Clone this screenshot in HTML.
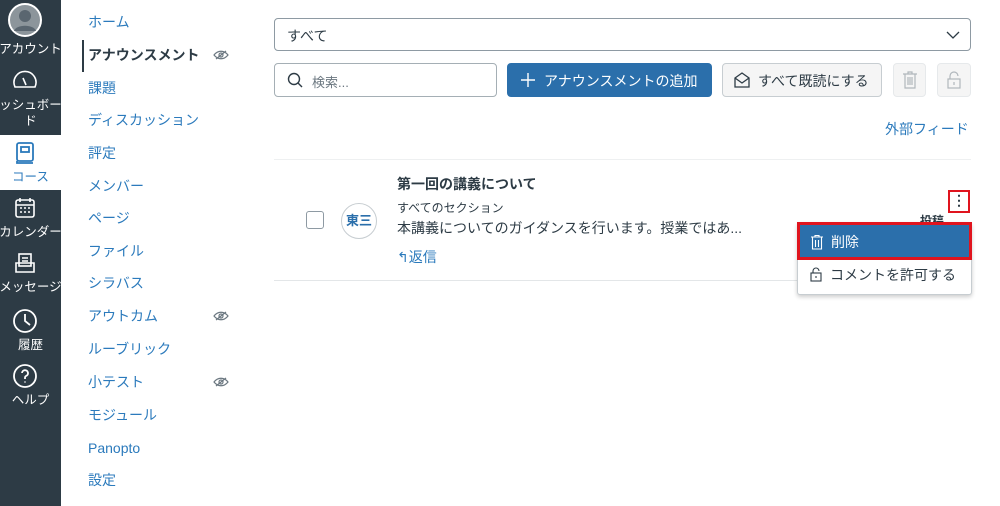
<!DOCTYPE html>
<html><head><meta charset="utf-8"><style>
*{margin:0;padding:0;box-sizing:border-box}
body{width:1000px;height:506px;overflow:hidden;background:#fff;font-family:"Liberation Sans","Noto Sans CJK JP",sans-serif;position:relative;color:#2d3b45}
.side{position:absolute;left:0;top:0;width:61px;height:506px;background:#2d3b45}
.si{position:absolute;left:0;width:61px;text-align:center;color:#fff;font-size:12.5px;white-space:nowrap;overflow:hidden}
.nav{position:absolute;left:88px;font-size:14px;line-height:20px;color:#2b7abc}
.eye{position:absolute;left:213px;width:16px;height:10px}
.a{position:absolute}
</style></head><body>
<div class="side"></div>
<div class="si" style="top:0;height:58px">
<svg width="34" height="34" style="position:absolute;left:8px;top:3px" viewBox="0 0 34 34"><circle cx="17" cy="17" r="16" fill="#8c959b" stroke="#fff" stroke-width="2"/><circle cx="17" cy="13" r="6" fill="#5a6670"/><path d="M6 28c2-7 20-7 22 0" fill="#5a6670"/></svg>
<div style="position:absolute;top:38px;left:-5px;width:71px">アカウント</div></div>
<div class="si" style="top:66px;height:66px">
<svg width="26" height="20" style="position:absolute;left:12px;top:4px" viewBox="0 0 26 20" fill="none" stroke="#fff" stroke-width="1.6"><path d="M3 17A11 11 0 1 1 23 17Z"/><path d="M11 8l3 7"/></svg>
<div style="position:absolute;top:28px;left:-10px;width:81px">ッシュボー</div><div style="position:absolute;top:44px;width:61px">ド</div></div>
<div class="a" style="left:0;top:135px;width:61px;height:55px;background:#fff"></div>
<div class="si" style="top:138px;height:50px;color:#2b7abc">
<svg width="20" height="24" style="position:absolute;left:15px;top:3px" viewBox="0 0 20 24" fill="none" stroke="#2b7abc" stroke-width="1.8"><rect x="2" y="2" width="16" height="18" rx="2"/><rect x="6" y="6" width="8" height="5"/><path d="M2 20v2h16"/></svg>
<div style="position:absolute;top:28px;width:61px">コース</div></div>
<div class="si" style="top:195px;height:45px">
<svg width="22" height="22" style="position:absolute;left:14px;top:2px" viewBox="0 0 22 22" fill="none" stroke="#fff" stroke-width="1.6"><rect x="2" y="3" width="18" height="17" rx="2"/><path d="M2 8h18M6 1v4M16 1v4M6 11h2M10 11h2M14 11h2M6 15h2M10 15h2M14 15h2"/></svg>
<div style="position:absolute;top:26px;left:-5px;width:71px">カレンダー</div></div>
<div class="si" style="top:250px;height:45px">
<svg width="22" height="22" style="position:absolute;left:14px;top:2px" viewBox="0 0 22 22" fill="none" stroke="#fff" stroke-width="1.6"><rect x="5" y="2" width="12" height="12"/><path d="M8 6h6M8 9h6M2 11h18v9H2z"/></svg>
<div style="position:absolute;top:26px;left:-5px;width:71px">メッセージ</div></div>
<div class="si" style="top:307px;height:45px">
<svg width="26" height="26" style="position:absolute;left:12px;top:1px" viewBox="0 0 26 26" fill="none" stroke="#fff" stroke-width="1.8"><circle cx="13" cy="13" r="11"/><path d="M13 6v7l5 4"/></svg>
<div style="position:absolute;top:27px;width:61px">履歴</div></div>
<div class="si" style="top:362px;height:45px">
<svg width="26" height="26" style="position:absolute;left:12px;top:1px" viewBox="0 0 26 26" fill="none" stroke="#fff" stroke-width="1.8"><circle cx="13" cy="13" r="11"/><path d="M10 10a3 3 0 1 1 4 3c-1 .5-1 1-1 3M13 18.5v1"/></svg>
<div style="position:absolute;top:27px;width:61px">ヘルプ</div></div>

<div class="a" style="left:82px;top:40px;width:2px;height:32px;background:#2d3b45"></div>
<div class="nav" style="top:12px">ホーム</div>
<div class="nav" style="top:45px;color:#2d3b45;font-weight:bold">アナウンスメント</div>
<div class="nav" style="top:78px">課題</div>
<div class="nav" style="top:110px">ディスカッション</div>
<div class="nav" style="top:143px">評定</div>
<div class="nav" style="top:176px">メンバー</div>
<div class="nav" style="top:208px">ページ</div>
<div class="nav" style="top:241px">ファイル</div>
<div class="nav" style="top:273px">シラバス</div>
<div class="nav" style="top:306px">アウトカム</div>
<div class="nav" style="top:339px">ルーブリック</div>
<div class="nav" style="top:372px">小テスト</div>
<div class="nav" style="top:405px">モジュール</div>
<div class="nav" style="top:438px">Panopto</div>
<div class="nav" style="top:470px">設定</div>
<svg class="eye" style="top:50px" viewBox="0 0 16 10" fill="none" stroke="#6b7780" stroke-width="1.2"><path d="M1 5c4-5 10-5 14 0c-4 5-10 5-14 0z"/><circle cx="8" cy="5" r="2"/><path d="M3 9L13 1"/></svg>
<svg class="eye" style="top:311px" viewBox="0 0 16 10" fill="none" stroke="#6b7780" stroke-width="1.2"><path d="M1 5c4-5 10-5 14 0c-4 5-10 5-14 0z"/><circle cx="8" cy="5" r="2"/><path d="M3 9L13 1"/></svg>
<svg class="eye" style="top:377px" viewBox="0 0 16 10" fill="none" stroke="#6b7780" stroke-width="1.2"><path d="M1 5c4-5 10-5 14 0c-4 5-10 5-14 0z"/><circle cx="8" cy="5" r="2"/><path d="M3 9L13 1"/></svg>

<div class="a" style="left:274px;top:18px;width:697px;height:33px;border:1px solid #8e9aa3;border-radius:4px;font-size:14px;padding:7px 12px">すべて
<svg width="14" height="8" style="position:absolute;right:10px;top:12px" viewBox="0 0 14 8" fill="none" stroke="#2d3b45" stroke-width="1.3"><path d="M1 1l6 6 6-6"/></svg></div>
<div class="a" style="left:274px;top:63px;width:223px;height:34px;border:1px solid #a5afb5;border-radius:4px;font-size:13px;color:#6b7780;padding:8px 0 0 37px">検索...
<svg width="16" height="16" style="position:absolute;left:12px;top:8px" viewBox="0 0 16 16" fill="none" stroke="#2d3b45" stroke-width="1.4"><circle cx="7" cy="7" r="5.5"/><path d="M11 11l4 4"/></svg></div>
<div class="a" style="left:507px;top:63px;width:205px;height:34px;background:#2b6fab;border-radius:4px;color:#fff;font-size:14px;padding:8px 0 0 37px">アナウンスメントの追加
<svg width="16" height="16" style="position:absolute;left:13px;top:9px" viewBox="0 0 16 16" stroke="#fff" stroke-width="1.4"><path d="M8 1v14M1 8h14"/></svg></div>
<div class="a" style="left:722px;top:63px;width:160px;height:34px;background:#f5f5f5;border:1px solid #c7cdd1;border-radius:4px;font-size:14px;padding:7px 0 0 35px">すべて既読にする
<svg width="18" height="18" style="position:absolute;left:10px;top:7px" viewBox="0 0 18 18" fill="none" stroke="#2d3b45" stroke-width="1.3"><path d="M2 7l7-5 7 5v9H2z"/><path d="M2 7l7 5 7-5"/></svg></div>
<div class="a" style="left:893px;top:63px;width:33px;height:34px;background:#f5f5f5;border:1px solid #e6e9eb;border-radius:4px">
<svg width="16" height="18" style="position:absolute;left:8px;top:7px" viewBox="0 0 16 18" fill="none" stroke="#b0b7bc" stroke-width="1.2"><path d="M1 3h14M6 3V1h4v2M3 3v14h10V3M6 6v8M8 6v8M10 6v8"/></svg></div>
<div class="a" style="left:937px;top:63px;width:34px;height:34px;background:#f5f5f5;border:1px solid #e6e9eb;border-radius:4px">
<svg width="14" height="18" style="position:absolute;left:9px;top:7px" viewBox="0 0 14 18" fill="none" stroke="#b0b7bc" stroke-width="1.2"><path d="M3 8V5a4 4 0 0 1 8 0"/><rect x="1" y="8" width="12" height="9"/><path d="M7 11v3"/></svg></div>
<div class="a" style="left:885px;top:119px;font-size:14px;color:#2b7abc">外部フィード</div>

<div class="a" style="left:274px;top:159px;width:697px;height:1px;background:#eef0f1"></div>
<div class="a" style="left:274px;top:280px;width:697px;height:1px;background:#e3e6e8"></div>
<div class="a" style="left:306px;top:211px;width:18px;height:18px;border:1px solid #8e9aa3;border-radius:3px"></div>
<div class="a" style="left:341px;top:203px;width:36px;height:36px;border:1px solid #c7cdd1;border-radius:50%;font-size:13px;font-weight:bold;color:#2b6fab;text-align:center;line-height:34px">東三</div>
<div class="a" style="left:397px;top:174px;font-size:14px;font-weight:bold">第一回の講義について</div>
<div class="a" style="left:397px;top:199px;font-size:12px">すべてのセクション</div>
<div class="a" style="left:397px;top:218px;font-size:14px">本講義についてのガイダンスを行います。授業ではあ...</div>
<div class="a" style="left:397px;top:247px;font-size:14px;color:#2b7abc">↰返信</div>
<div class="a" style="left:920px;top:212px;font-size:12px;font-weight:bold">投稿</div>
<div class="a" style="left:948px;top:190px;width:22px;height:23px;border:2px solid #e0141e;background:#fff;text-align:center;font-weight:bold;font-size:14px;line-height:17px">⋮</div>
<div class="a" style="left:797px;top:222px;width:175px;height:73px;background:#fff;border:1px solid #c7cdd1;border-radius:3px;box-shadow:0 2px 4px rgba(0,0,0,.2)"></div>
<div class="a" style="left:797px;top:222px;width:175px;height:38px;border:3px solid #e0141e;background:#2b6fab;color:#fff;font-size:14px;padding:7px 0 0 31px">削除
<svg width="12" height="15" style="position:absolute;left:11px;top:10px" viewBox="0 0 12 15" fill="none" stroke="#fff" stroke-width="1.1"><path d="M0 2h12M4 2V0.5h4V2M1.5 2v12h9V2M4.5 5v7M7.5 5v7"/></svg></div>
<div class="a" style="left:830px;top:265px;font-size:14px">コメントを許可する</div>
<svg class="a" width="12" height="15" style="left:810px;top:267px" viewBox="0 0 12 15" fill="none" stroke="#2d3b45" stroke-width="1.1"><path d="M3 6V4a3 3 0 0 1 6 0"/><rect x="1" y="6" width="10" height="8"/><path d="M6 9v2"/></svg>
</body></html>
